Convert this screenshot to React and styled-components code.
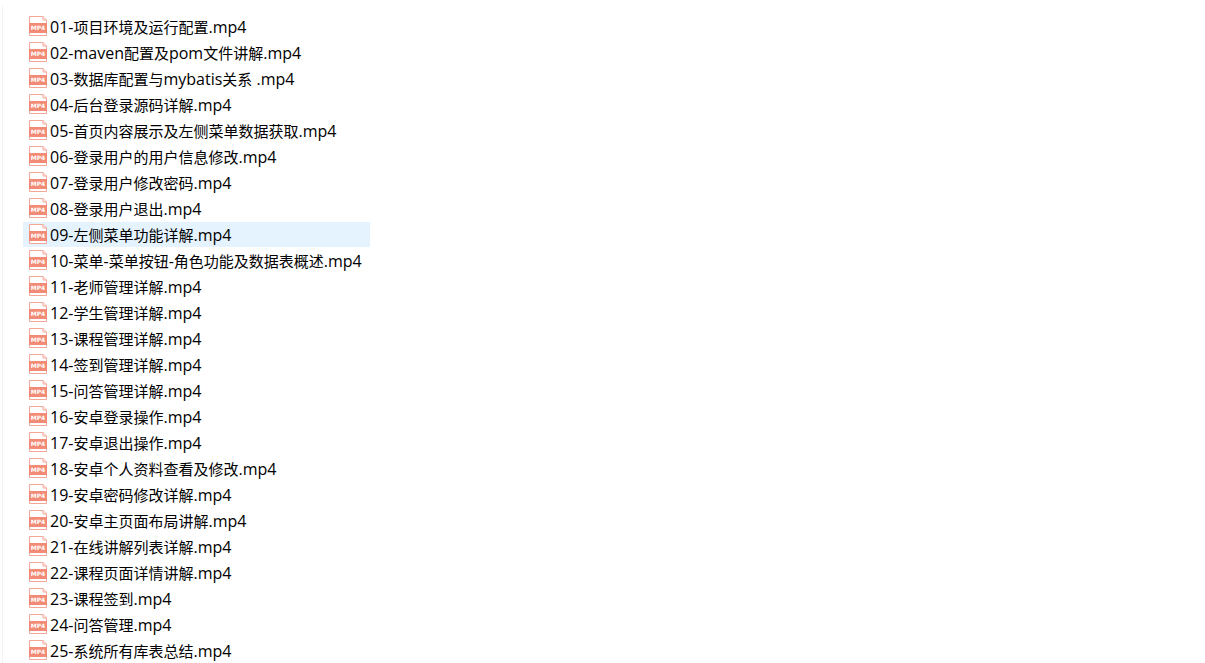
import React from 'react'
import styled, { createGlobalStyle } from 'styled-components'

const files = [
    '01-项目环境及运行配置.mp4',
    '02-maven配置及pom文件讲解.mp4',
    '03-数据库配置与mybatis关系 .mp4',
    '04-后台登录源码详解.mp4',
    '05-首页内容展示及左侧菜单数据获取.mp4',
    '06-登录用户的用户信息修改.mp4',
    '07-登录用户修改密码.mp4',
    '08-登录用户退出.mp4',
    '09-左侧菜单功能详解.mp4',
    '10-菜单-菜单按钮-角色功能及数据表概述.mp4',
    '11-老师管理详解.mp4',
    '12-学生管理详解.mp4',
    '13-课程管理详解.mp4',
    '14-签到管理详解.mp4',
    '15-问答管理详解.mp4',
    '16-安卓登录操作.mp4',
    '17-安卓退出操作.mp4',
    '18-安卓个人资料查看及修改.mp4',
    '19-安卓密码修改详解.mp4',
    '20-安卓主页面布局讲解.mp4',
    '21-在线讲解列表详解.mp4',
    '22-课程页面详情讲解.mp4',
    '23-课程签到.mp4',
    '24-问答管理.mp4',
    '25-系统所有库表总结.mp4',
]

function Mp4Icon() {
    return (
        <IconStyled viewBox="0 0 18 20" aria-hidden="true">
            <path d="M.5 .5H14L17.5 4V19.5H.5Z" fill="#fff" stroke="#f3a799" />
            <path d="M14 .5V4H17.5" fill="none" stroke="#f3a799" />
            <rect x="0" y="7" width="18" height="10" fill="#f28b76" />
            <text x="9" y="14" textAnchor="middle">MP4</text>
        </IconStyled>
    )
}

// Latin letters and digits are set one size up from the Chinese text
function FileName({ name }) {
    return (
        <NameStyled>
            {name.split(/([\x20-\x7e]+)/).map((part, index) => (
                index % 2 ? <Latin key={index}>{part}</Latin> : part
            ))}
        </NameStyled>
    )
}

function App() {
    const [selected, setSelected] = React.useState(8)

    return (
        <PageStyled>
            <GlobalStyle />
            <FileList>
                {files.map((name, index) => (
                    <li key={name}>
                        <FileRow
                            type="button"
                            $active={index === selected}
                            aria-pressed={index === selected}
                            onClick={() => setSelected(index)}
                        >
                            <Mp4Icon />
                            <FileName name={name} />
                        </FileRow>
                    </li>
                ))}
            </FileList>
        </PageStyled>
    )
}

const GlobalStyle = createGlobalStyle`
  * {
    box-sizing: border-box;
  }

  body {
    margin: 0;
    background-color: #ffffff;
  }
`;

const PageStyled = styled.main`
  margin: 6px 0 0 2px;
  padding: 8px 20px 0;
  border-left: 1px solid #f3f3f3;
`;

const FileList = styled.ul`
  display: grid;
  gap: 1px;
  width: fit-content;
  margin: 0;
  padding: 0;
  list-style: none;
`;

const FileRow = styled.button`
  display: flex;
  align-items: flex-start;
  gap: 3px;
  width: 100%;
  height: 25px;
  padding: 2px 8px 0 6px;
  border: none;
  background-color: ${({ $active }) => ($active ? '#e5f3ff' : 'transparent')};
  color: #000000;
  font-family: 'Open Sans', 'Noto Sans CJK SC', sans-serif;
  font-size: 15px;
  line-height: 23px;
  text-align: left;
  white-space: pre;
  cursor: default;
`;

const NameStyled = styled.span`
  display: block;
`;

const Latin = styled.span`
  font-size: 16px;
`;

const IconStyled = styled.svg`
  flex: none;
  width: 18px;
  height: 20px;

  text {
    fill: #ffffff;
    font-family: 'DejaVu Sans', sans-serif;
    font-size: 6px;
    font-weight: 700;
  }
`;

export default App
